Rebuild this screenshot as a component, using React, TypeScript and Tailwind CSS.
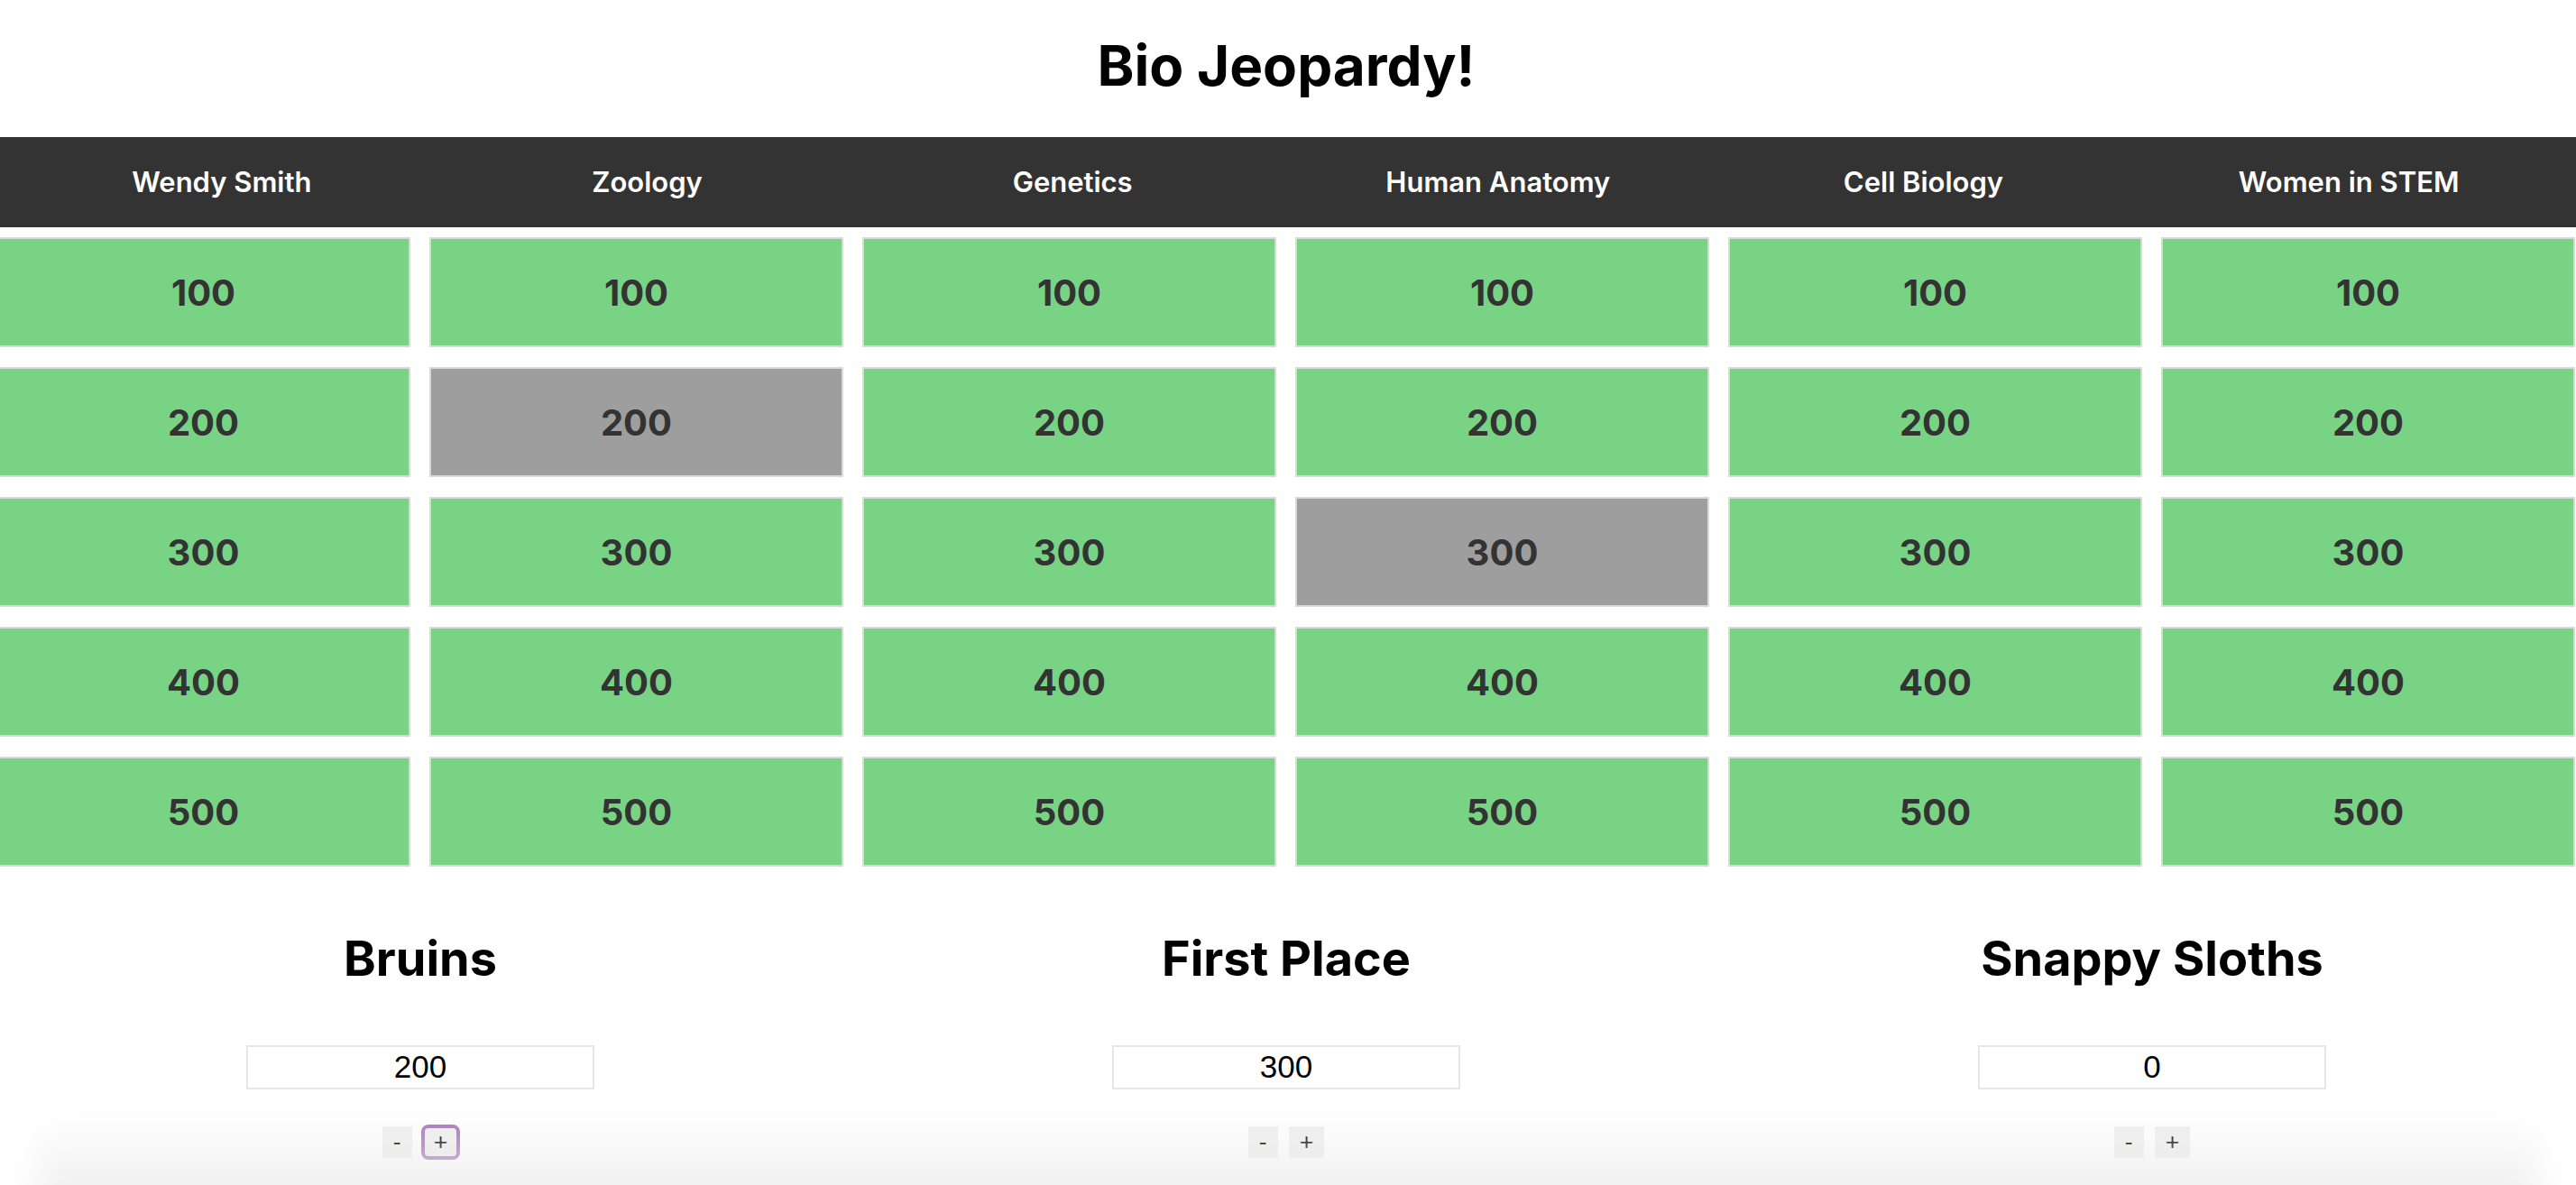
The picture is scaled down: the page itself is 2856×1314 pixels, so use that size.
import React from "react";

const categories = ["Wendy Smith", "Zoology", "Genetics", "Human Anatomy", "Cell Biology", "Women in STEM"];
const values = [100, 200, 300, 400, 500];
const used: Record<string, boolean> = { "1-200": true, "3-300": true };
const teams = [
  { name: "Bruins", score: "200", focused: true },
  { name: "First Place", score: "300", focused: false },
  { name: "Snappy Sloths", score: "0", focused: false },
];

export default function App() {
  return (
    <div className="relative w-full overflow-hidden bg-white min-h-[1314px]">
      <div className="w-[2880px] -ml-[14px] flex flex-col">
        <h1 className="pt-[33px] text-center text-[62px] leading-[80px] font-bold text-black [font-family:Inter,'Noto_Sans',sans-serif]">
          Bio Jeopardy!
        </h1>

        <div className="mt-[39px] h-[100px] bg-[#333333] pl-[24px] pr-[26px] grid grid-cols-6 items-center">
          {categories.map((c) => (
            <div key={c} className="text-center text-white text-[31px] font-semibold [font-family:Inter,'Noto_Sans',sans-serif]">
              {c}
            </div>
          ))}
        </div>

        <div className="mt-[11px] pl-[10px] pr-[11px] grid grid-cols-6 gap-x-[21px] gap-y-[22px]">
          {values.map((v) =>
            categories.map((_, ci) => {
              const isUsed = used[`${ci}-${v}`];
              return (
                <div
                  key={`${ci}-${v}`}
                  className={
                    "h-[122px] pt-[2px] border-2 border-[#d9d9d9] flex items-center justify-center text-[40px] font-bold text-[#333333] [font-family:Inter,'Noto_Sans',sans-serif] " +
                    (isUsed ? "bg-[#9e9e9e]" : "bg-[#78d385]")
                  }
                >
                  {v}
                </div>
              );
            })
          )}
        </div>

        <div className="mt-[68px] grid grid-cols-3">
          {teams.map((t) => (
            <div key={t.name} className="flex flex-col items-center">
              <h2 className="text-[54px] leading-[68px] font-bold text-black [font-family:Inter,'Noto_Sans',sans-serif]">
                {t.name}
              </h2>
              <div className="mt-[62px] w-[386px] h-[49px] border-2 border-[#e6e6e6] bg-white flex items-center justify-center text-[35px] text-black [font-family:'Liberation_Sans',Arial,sans-serif]">
                {t.score}
              </div>
              <div className="mt-[41px] flex gap-[12px] items-center">
                <button className="h-[35px] px-[12px] bg-[#efefef] text-[26.67px] leading-none text-black [font-family:'Liberation_Sans',Arial,sans-serif]">
                  -
                </button>
                <button
                  className={
                    "h-[35px] px-[12px] bg-[#efefef] text-[26.67px] leading-none text-black [font-family:'Liberation_Sans',Arial,sans-serif] " +
                    (t.focused ? "rounded-[6px] [outline:4px_solid_#a474b5] [outline-offset:-2px]" : "")
                  }
                >
                  +
                </button>
              </div>
            </div>
          ))}
        </div>
      </div>
      <div className="pointer-events-none absolute left-[40px] right-[40px] bottom-[-30px] h-[110px] bg-gradient-to-b from-white/0 to-[#ececec] blur-[18px]" />
    </div>
  );
}
